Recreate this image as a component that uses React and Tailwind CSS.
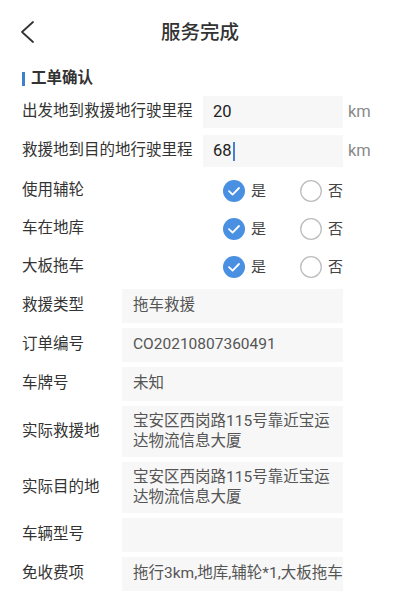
import React from "react";

const font = { fontFamily: 'Roboto, "Noto Sans CJK SC", "Noto Sans", sans-serif' };

function Checked() {
  return (
    <svg width="22" height="22" viewBox="0 0 22 22" className="block">
      <circle cx="11" cy="11" r="11" fill="#4a90e2" />
      <polyline points="6,11.2 9.6,14.6 16,8" fill="none" stroke="#fff" strokeWidth="1.8" strokeLinecap="round" strokeLinejoin="round" />
    </svg>
  );
}

function Empty() {
  return (
    <svg width="22" height="22" viewBox="0 0 22 22" className="block">
      <circle cx="11" cy="11" r="10.3" fill="#fff" stroke="#bdbdbd" strokeWidth="1.3" />
    </svg>
  );
}

function RadioRow({ label }) {
  return (
    <div className="flex h-[38px] items-center">
      <div className="w-[201px] text-[15.5px] text-[#333]">{label}</div>
      <div className="flex items-center">
        <Checked />
        <span className="ml-[6px] text-[15px] text-[#444]">是</span>
      </div>
      <div className="ml-[34px] flex items-center">
        <Empty />
        <span className="ml-[6px] text-[15px] text-[#444]">否</span>
      </div>
    </div>
  );
}

function InputRow({ label, value, cursor }) {
  return (
    <div className="flex h-[32px] items-center">
      <div className="w-[181px] whitespace-nowrap text-[15.5px] text-[#333]">{label}</div>
      <div className="flex h-full w-[140px] items-center bg-[#f7f7f7] pl-[10px] text-[16.5px] text-[#222]">
        {value}
        {cursor && <span className="ml-[1px] inline-block h-[19px] w-[2px] bg-[#4a7fd0]" />}
      </div>
      <div className="ml-[5px] text-[16.5px] text-[#8a8a8a]">km</div>
    </div>
  );
}

function BoxRow({ label, value, tall, nowrap }) {
  return (
    <div className={`flex items-center ${tall ? "h-[51px]" : "h-[34px]"}`}>
      <div className="w-[100px] text-[15.5px] text-[#333]">{label}</div>
      <div
        className={`flex h-full w-[221px] items-center overflow-hidden bg-[#f7f7f7] pl-[11px] text-[15.5px] leading-[19.5px] text-[#555] ${nowrap ? "whitespace-nowrap" : "pr-[9px]"}`}
      >
        <div>{value}</div>
      </div>
    </div>
  );
}

export default function App() {
  return (
    <div className="h-[612px] w-[400px] overflow-hidden bg-white" style={font}>
      <div className="relative flex h-[64px] items-center justify-center">
        <svg width="16" height="24" viewBox="0 0 16 24" className="absolute left-[19px] top-[20px]">
          <polyline points="14,2 3,12 14,22" fill="none" stroke="#333" strokeWidth="1.8" strokeLinecap="round" strokeLinejoin="round" />
        </svg>
        <div className="pt-[2px] text-[19.5px] font-medium text-[#333]">服务完成</div>
      </div>
      <div className="px-[22px]">
        <div className="flex h-[30px] items-center">
          <div className="h-[14px] w-[3px] bg-[#3f7fcf]" />
          <div className="ml-[6px] text-[15.5px] font-bold text-[#333]">工单确认</div>
        </div>
        <div className="mt-[2px] flex flex-col gap-[7px]">
          <InputRow label="出发地到救援地行驶里程" value="20" />
          <InputRow label="救援地到目的地行驶里程" value="68" cursor />
        </div>
        <div className="mt-[5px]">
          <RadioRow label="使用辅轮" />
          <RadioRow label="车在地库" />
          <RadioRow label="大板拖车" />
        </div>
        <div className="mt-[3px] flex flex-col gap-[5px]">
          <BoxRow label="救援类型" value="拖车救援" />
          <BoxRow label="订单编号" value="CO20210807360491" />
          <BoxRow label="车牌号" value="未知" />
          <BoxRow label="实际救援地" value="宝安区西岗路115号靠近宝运达物流信息大厦" tall />
          <BoxRow label="实际目的地" value="宝安区西岗路115号靠近宝运达物流信息大厦" tall />
          <BoxRow label="车辆型号" value="" />
          <BoxRow label="免收费项" value="拖行3km,地库,辅轮*1,大板拖车" nowrap />
        </div>
      </div>
    </div>
  );
}
